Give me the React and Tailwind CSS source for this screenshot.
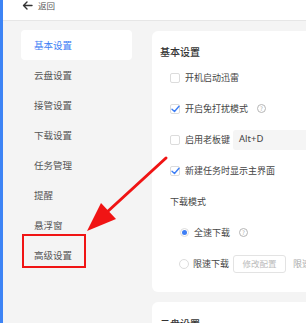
import React from "react";

const F = { fontFamily: '"Noto Sans CJK SC", "Noto Sans", sans-serif' };

function Check({ checked }) {
  return (
    <span className="relative flex h-[10px] w-[10px] shrink-0 items-center justify-center rounded-[2px] border border-[#dcdcdc] bg-white">
      {checked && (
        <svg width="9" height="8" viewBox="0 0 9 8" className="absolute">
          <path d="M1 4.2 L3.5 6.5 L8 1.2" fill="none" stroke="#3d7ef5" strokeWidth="1.4" strokeLinecap="round" strokeLinejoin="round" />
        </svg>
      )}
    </span>
  );
}

function Q() {
  return (
    <span className="flex h-[9px] w-[9px] items-center justify-center rounded-full border border-[#b5b5b5] text-[6px] leading-none text-[#aaa]">?</span>
  );
}

export default function App() {
  const items = ["云盘设置", "接管设置", "下载设置", "任务管理", "提醒", "悬浮窗", "高级设置"];
  return (
    <div className="relative flex h-[323px] w-[306px] overflow-hidden bg-[#f4f4f4]" style={F}>
      <div className="w-[3px] shrink-0 bg-[#3d84f5]" />
      <div className="flex min-w-0 flex-1 flex-col">
        <div className="flex h-[21px] shrink-0 items-start border-b border-[#e6e6e6] bg-white pl-[19px]">
          <div className="flex h-[11px] items-center gap-[5px]">
            <svg width="11" height="9" viewBox="0 0 11 9">
              <path d="M10 4.5 H1.5 M5 1 L1.5 4.5 L5 8" fill="none" stroke="#333" strokeWidth="1.4" strokeLinecap="round" strokeLinejoin="round" />
            </svg>
            <span className="text-[8.5px] leading-none text-[#555]">返回</span>
          </div>
        </div>
        <div className="flex min-h-0 flex-1">
          <div className="w-[149px] shrink-0 pl-[18px] pr-[20px] pt-[9px]">
            <div className="flex h-[30px] items-center rounded-[4px] bg-white pl-[13px] text-[9.5px] text-[#3d7ef5]">基本设置</div>
            {items.map((t) => (
              <div key={t} className="flex h-[30px] items-center pl-[13px] text-[9.5px] text-[#555]">{t}</div>
            ))}
          </div>
          <div className="flex min-w-0 flex-1 flex-col gap-[10px] pt-[10px]">
            <div className="rounded-l-[6px] bg-white pb-[13px] pl-[8px] pt-[13px]">
              <div className="h-[16px] text-[10px] font-medium leading-[16px] text-[#333]">基本设置</div>
              <div className="mt-[2px] pl-[10px] text-[9px] text-[#444]">
                <div className="flex h-[31px] items-center gap-[5px]">
                  <Check />
                  <span>开机启动迅雷</span>
                </div>
                <div className="flex h-[31px] items-center gap-[5px]">
                  <Check checked />
                  <span>开启免打扰模式</span>
                  <span className="ml-[4px]"><Q /></span>
                </div>
                <div className="flex h-[31px] items-center gap-[5px]">
                  <Check />
                  <span>启用老板键</span>
                  <div className="ml-[-2px] flex h-[20px] flex-1 items-center rounded-l-[3px] bg-[#f5f5f5] pl-[6px] text-[9.5px] text-[#444]" style={{ fontFamily: '"Noto Sans", sans-serif' }}>Alt+D</div>
                </div>
                <div className="flex h-[31px] items-center gap-[5px]">
                  <Check checked />
                  <span>新建任务时显示主界面</span>
                </div>
                <div className="flex h-[31px] items-center">下载模式</div>
                <div className="flex h-[31px] items-center gap-[5px] pl-[10px]">
                  <span className="flex h-[9px] w-[9px] items-center justify-center rounded-full border border-[#dcdcdc]">
                    <span className="h-[5px] w-[5px] rounded-full bg-[#3d7ef5]" />
                  </span>
                  <span>全速下载</span>
                  <span className="ml-[4px]"><Q /></span>
                </div>
                <div className="flex h-[31px] items-center gap-[4px] pl-[9px] whitespace-nowrap">
                  <span className="h-[10px] w-[10px] shrink-0 rounded-full border border-[#dcdcdc]" />
                  <span>限速下载</span>
                  <span className="flex h-[18px] w-[53px] shrink-0 items-center justify-center rounded-[3px] border border-[#e3e3e3] text-[8.5px] text-[#bbb]">修改配置</span>
                  <span className="ml-[3px] text-[#aaa]">限速</span>
                </div>
              </div>
            </div>
            <div className="h-[40px] rounded-l-[6px] bg-white pl-[8px] pt-[14px]">
              <div className="text-[10px] font-medium leading-[16px] text-[#333]">云盘设置</div>
            </div>
          </div>
        </div>
      </div>

      <div className="absolute left-[22px] top-[234px] h-[34px] w-[64px] border-2 border-[#f01414]" />
      <svg className="pointer-events-none absolute left-0 top-0" width="306" height="323" viewBox="0 0 306 323">
        <line x1="166" y1="158" x2="106" y2="213" stroke="#f01414" strokeWidth="3" strokeLinecap="round" />
        <polygon points="87,231 101,203 116,219" fill="#f01414" />
      </svg>
    </div>
  );
}
